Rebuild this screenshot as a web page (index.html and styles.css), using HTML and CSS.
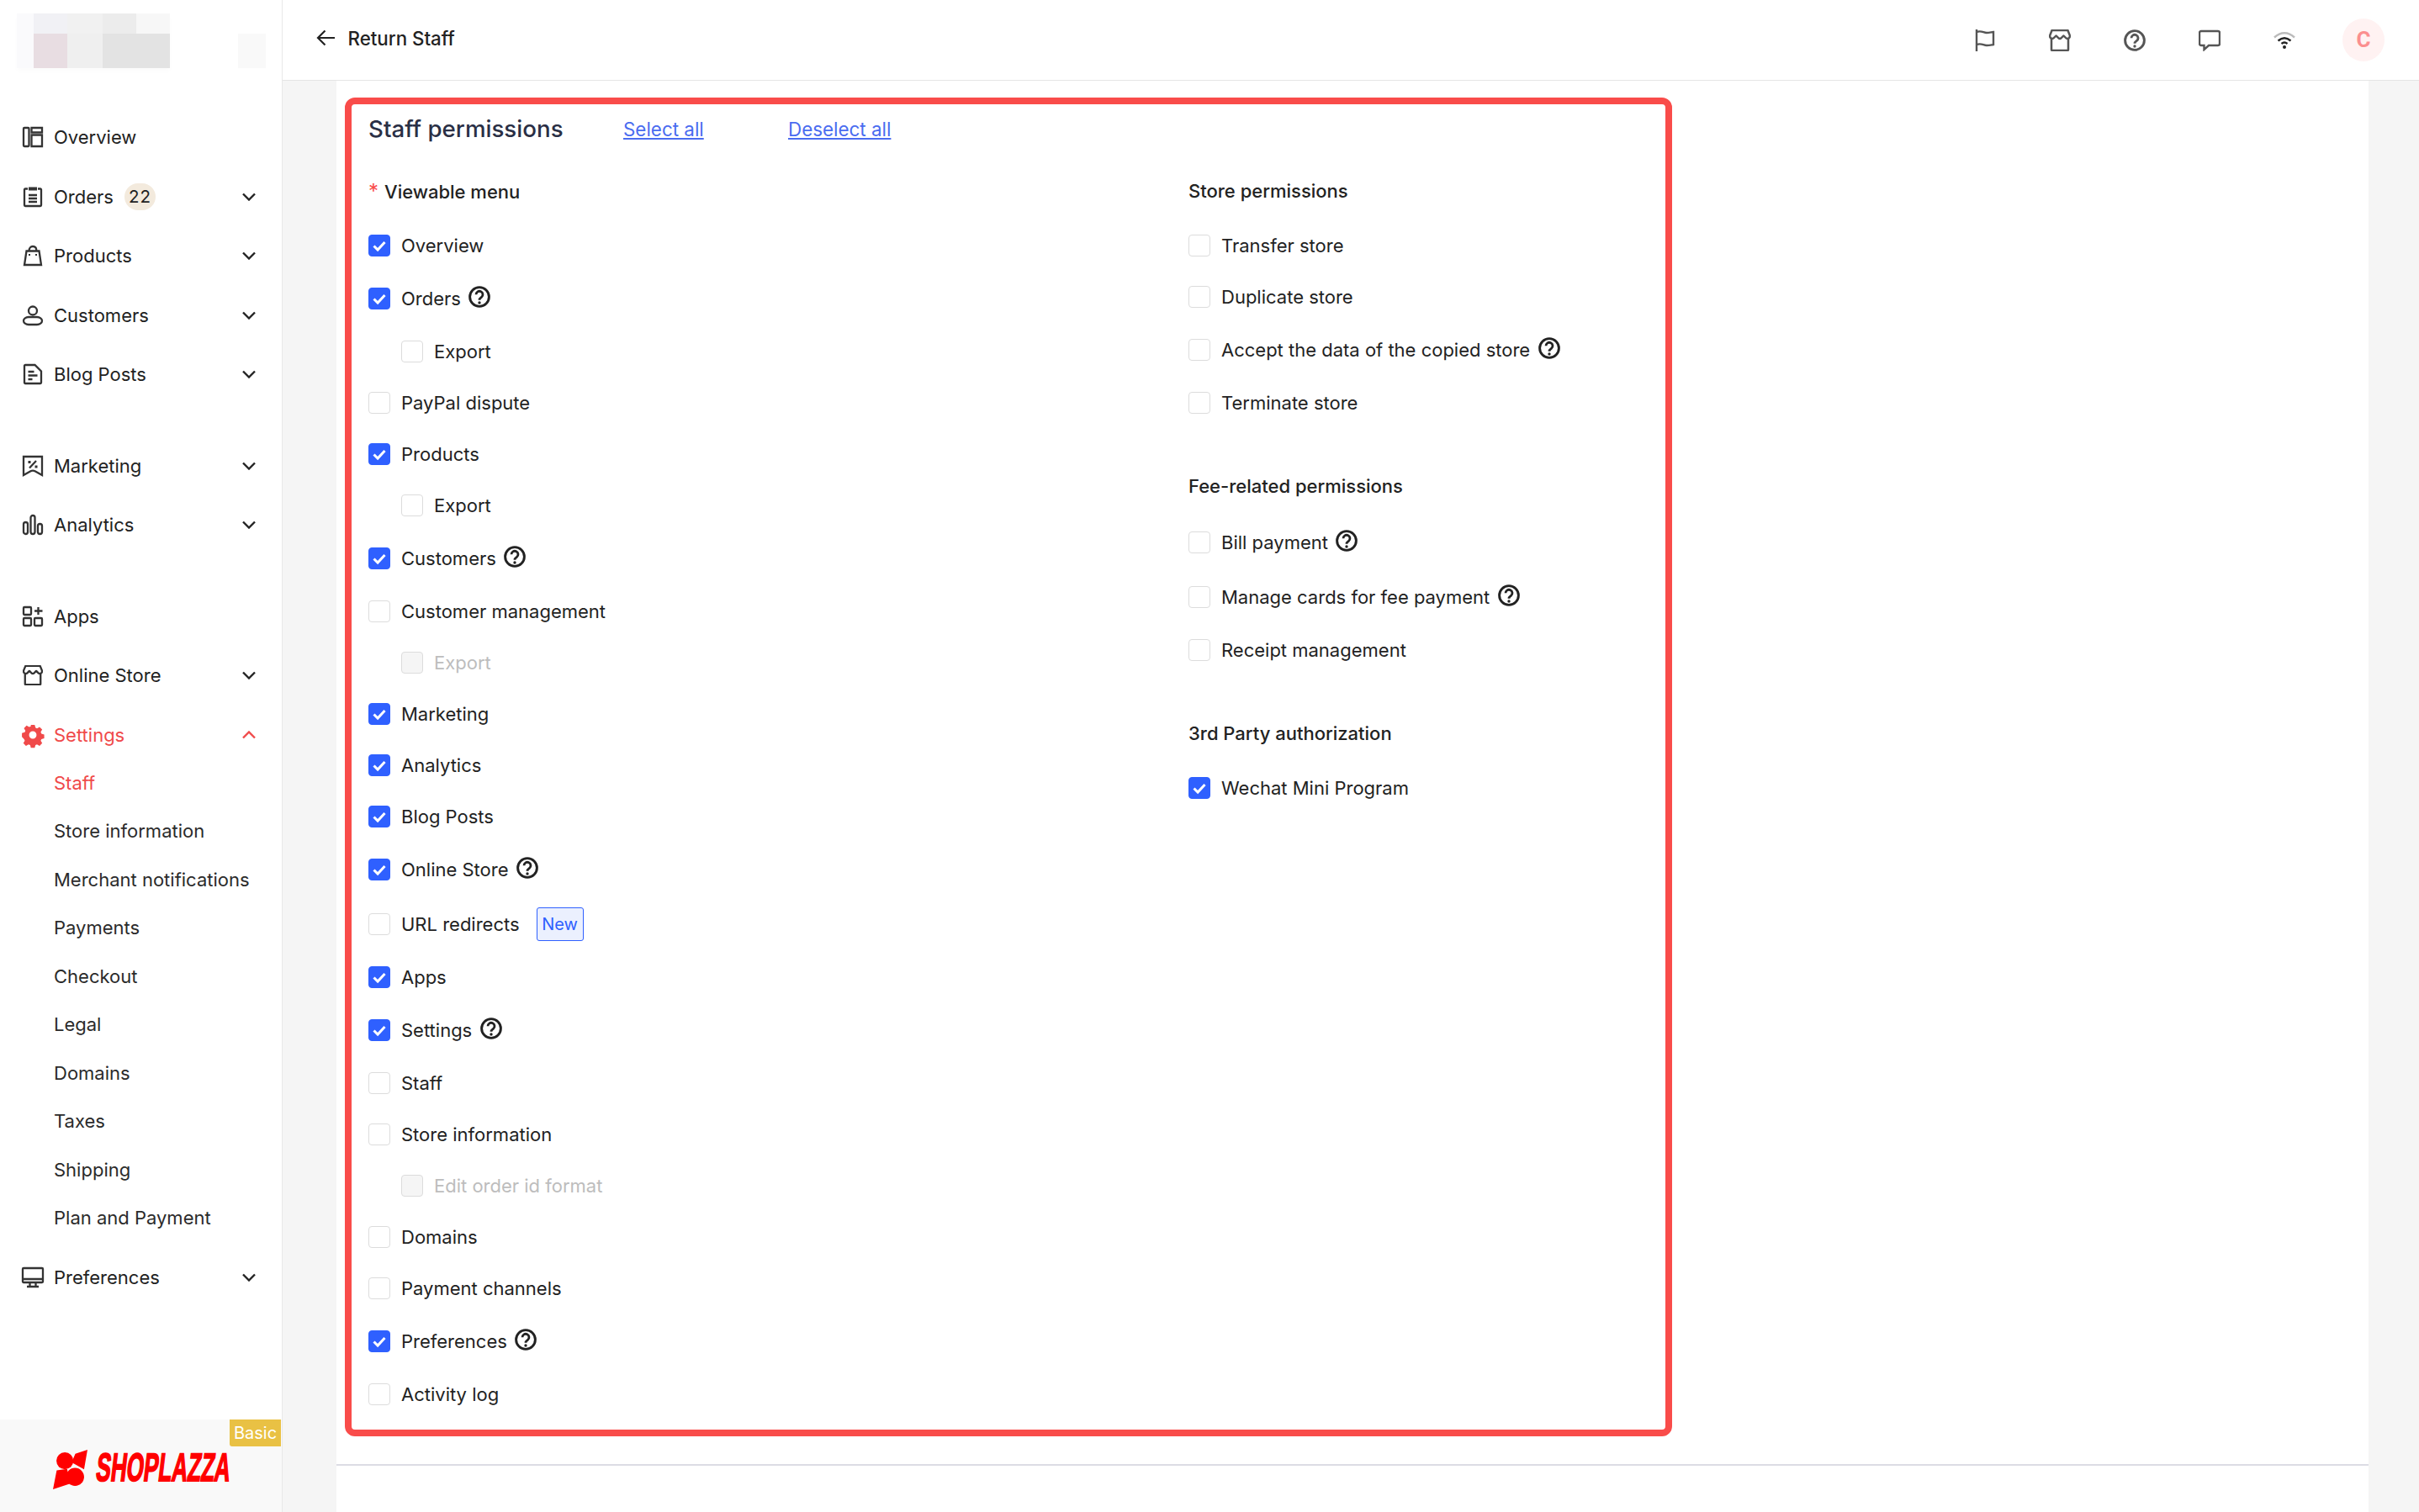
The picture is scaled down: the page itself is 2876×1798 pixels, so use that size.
FILE: index.html
```html
<!DOCTYPE html>
<html lang="en">
<head>
<meta charset="utf-8">
<title>Return Staff</title>
<link rel="stylesheet" href="styles.css">
</head>
<body>
<svg class="defs" aria-hidden="true">
  <symbol id="help" viewBox="0 0 26 26"><circle cx="13" cy="13" r="11.400" fill="none" stroke="currentColor" stroke-width="2.900"/><path d="M9 10.300a4 4 0 1 1 6.400 3.200c-1.400 1-2.400 1.600-2.400 3.200" fill="none" stroke="currentColor" stroke-width="2.800"/><circle cx="13" cy="20" r="1.700" fill="currentColor"/></symbol>
  <symbol id="check" viewBox="0 0 26 26"><path d="M6.500 13.500l4.600 4.600 8.400-9" fill="none" stroke="#fff" stroke-width="3"/></symbol>
  <symbol id="chev" viewBox="0 0 16 10"><path d="M1 1.500l7 7 7-7" fill="none" stroke="currentColor" stroke-width="2.400"/></symbol>
  <symbol id="store" viewBox="0 0 26 26"><path d="M3 11v13a1 1 0 0 0 1 1h18a1 1 0 0 0 1-1V11M3.600 1h18.800l2.600 6.500c0 2.500-2 3.500-3.200 3.500-1.800 0-3.600-3.400-4.400-3.400S15 11 13 11 9.400 7.600 8.600 7.600 6 11 4.200 11C3 11 1 10 1 7.500z" fill="none" stroke="currentColor" stroke-width="2.500" stroke-linejoin="round"/></symbol>
</svg>

<aside class="sidebar">
  <div class="brand-top">
    <div class="mosaic" aria-hidden="true">
      <i class="m1"></i><i class="m2"></i><i class="m3"></i><i class="m4"></i><i class="m5"></i>
      <i class="m1"></i><i class="m6"></i><i class="m7"></i><i class="m8"></i><i class="m8"></i>
    </div>
    <i class="mosaic-side" aria-hidden="true"></i>
  </div>
  <nav class="nav">
    <div class="nav-group">
      <a class="nav-item"><svg class="nav-icon" viewBox="0 0 24 24"><rect x="1" y="1" width="6.500" height="22" rx="1"/><path d="M10.500 1h12.500v5.500H10.500zM10.500 9.500H23V23H10.500z"/></svg><span>Overview</span></a>
      <a class="nav-item"><svg class="nav-icon" viewBox="0 0 24 24"><path d="M6 2.500H3a1 1 0 0 0-1 1V22a1 1 0 0 0 1 1h18a1 1 0 0 0 1-1V3.500a1 1 0 0 0-1-1h-3M7 10h10M7 14h10M7 18h10"/><rect class="solid" x="7" y="0.500" width="10" height="4"/></svg><span>Orders</span><b class="count">22</b><svg class="chev"><use href="#chev"/></svg></a>
      <a class="nav-item"><svg class="nav-icon" viewBox="0 0 24 24"><path d="M4.500 6.500h15L22 23H2zM7.500 6.500C7.500 3 9.500 1 12 1s4.500 2 4.500 5.500"/><rect class="solid" x="7" y="10" width="2" height="2"/><rect class="solid" x="15" y="10" width="2" height="2"/></svg><span>Products</span><svg class="chev"><use href="#chev"/></svg></a>
      <a class="nav-item"><svg class="nav-icon" viewBox="0 0 24 24"><circle cx="12" cy="6.500" r="5"/><path d="M7 14h10a6 4.500 0 0 1 0 9H7a6 4.500 0 0 1 0-9z"/></svg><span>Customers</span><svg class="chev"><use href="#chev"/></svg></a>
      <a class="nav-item"><svg class="nav-icon" viewBox="0 0 24 24"><path d="M2 2a1 1 0 0 1 1-1h11.500L22 8.500V22a1 1 0 0 1-1 1H3a1 1 0 0 1-1-1zM6.500 9h7M6.500 13.500h11M6.500 18h5"/></svg><span>Blog Posts</span><svg class="chev"><use href="#chev"/></svg></a>
    </div>
    <div class="nav-group">
      <a class="nav-item"><svg class="nav-icon" viewBox="0 0 24 24"><path d="M1 1h22v22l-8-4.500a6 6 0 0 0-6 0L1 23zM8 14.500L16 6"/><rect class="solid" x="6.500" y="6" width="3" height="3"/><rect class="solid" x="14.500" y="11.500" width="3" height="3"/></svg><span>Marketing</span><svg class="chev"><use href="#chev"/></svg></a>
      <a class="nav-item"><svg class="nav-icon" viewBox="0 0 24 24"><rect x="1" y="9" width="5" height="14" rx="2.500"/><rect x="9.500" y="1" width="5" height="22" rx="2.500"/><rect x="18" y="11" width="5" height="12" rx="2.500"/></svg><span>Analytics</span><svg class="chev"><use href="#chev"/></svg></a>
    </div>
    <div class="nav-group">
      <a class="nav-item"><svg class="nav-icon" viewBox="0 0 24 24"><rect x="1" y="1" width="9" height="9" rx="1"/><rect x="1" y="14" width="9" height="9" rx="1"/><rect x="14" y="14" width="9" height="9" rx="1"/><path d="M18.500 1v9M14 5.500h9.500"/></svg><span>Apps</span></a>
      <a class="nav-item"><svg class="nav-icon nav-icon-sym"><use href="#store"/></svg><span>Online Store</span><svg class="chev"><use href="#chev"/></svg></a>
      <a class="nav-item nav-active"><svg class="nav-icon-gear" viewBox="0 0 26 26"><path fill-rule="evenodd" d="M10.500 0h5l.9 3.600 2 .9 3.300-1.900 3.400 3.400-1.900 3.300.9 2.200 3.600.9v5l-3.600.9-.9 2 1.900 3.300-3.400 3.400-3.300-1.900-2 .9-.9 3.600h-5l-.9-3.600-2.100-.9-3.300 1.900-3.400-3.400 1.900-3.300-.9-2L-1 15.500v-5l3.600-.9.9-2.100L1.600 4.200 5 .8l3.300 1.900 2.100-.9zM13 8.200a4.800 4.800 0 1 0 0 9.600 4.800 4.800 0 0 0 0-9.600z"/></svg><span>Settings</span><svg class="chev chev-up"><use href="#chev"/></svg></a>
      <div class="sub-list">
        <a class="sub-item sub-active">Staff</a>
        <a class="sub-item">Store information</a>
        <a class="sub-item">Merchant notifications</a>
        <a class="sub-item">Payments</a>
        <a class="sub-item">Checkout</a>
        <a class="sub-item">Legal</a>
        <a class="sub-item">Domains</a>
        <a class="sub-item">Taxes</a>
        <a class="sub-item">Shipping</a>
        <a class="sub-item">Plan and Payment</a>
      </div>
      <a class="nav-item"><svg class="nav-icon" viewBox="0 0 24 24"><rect x="0" y="1" width="24" height="17" rx="1"/><path d="M0 14h24M8.500 18v5M15.500 18v5M5 23h14"/></svg><span>Preferences</span><svg class="chev"><use href="#chev"/></svg></a>
    </div>
  </nav>
  <div class="side-foot">
    <span class="plan-tag">Basic</span>
    <svg class="logo-mark" viewBox="0 0 122 140" aria-hidden="true"><path d="M122 0L79 14 66 45l44 24zM13 73L0 140l61-20-11-52z"/><circle cx="42" cy="39" r="30"/><circle cx="78" cy="96" r="32"/></svg>
    <span class="logo-text"><span class="logo-inner">SHOPLAZZA</span></span>
  </div>
</aside>

<div class="main">
  <header class="topbar">
    <a class="back"><svg class="back-arrow" viewBox="0 0 22 20"><path d="M22 10H2M10.500 1.500L2 10l8.500 8.500"/></svg><span>Return Staff</span></a>
    <div class="tools">
      <svg class="tool" viewBox="0 0 26 26"><path d="M3 0v26M3 3c6-2 8 1 12 1 3 0 5-.6 8-1v15c-3 .5-5 1-8 1-4 0-6-3-12-1"/></svg>
      <svg class="tool"><use href="#store"/></svg>
      <svg class="tool"><use href="#help"/></svg>
      <svg class="tool" viewBox="0 0 26 26"><path d="M3 2h20a2 2 0 0 1 2 2v13a2 2 0 0 1-2 2H12l-5.500 5v-5H3a2 2 0 0 1-2-2V4a2 2 0 0 1 2-2z"/></svg>
      <svg class="tool wifi" viewBox="0 0 26 20"><path class="wifi-off" d="M1 6.500C8.500-.500 17.500-.500 25 6.500"/><path d="M5.500 10.500c5-4.300 10-4.300 15 0M9.500 14c2.500-2 4.500-2 7 0"/><circle class="wifi-dot" cx="13" cy="18" r="2"/></svg>
      <span class="avatar">C</span>
    </div>
  </header>
  <div class="stage">
    <div class="panel">
      <section class="perm-card">
        <div class="perm-head">
          <h2>Staff permissions</h2>
          <a class="link link-select">Select all</a>
          <a class="link">Deselect all</a>
        </div>
        <div class="perm-cols">
          <div class="perm-col">
            <div class="label"><em>*</em>Viewable menu</div>
            <div class="perm-list">
              <label class="row"><i class="cb on"><svg><use href="#check"/></svg></i>Overview</label>
              <label class="row tall"><i class="cb on"><svg><use href="#check"/></svg></i>Orders<svg class="help"><use href="#help"/></svg></label>
              <label class="row sub"><i class="cb"></i>Export</label>
              <label class="row"><i class="cb"></i>PayPal dispute</label>
              <label class="row"><i class="cb on"><svg><use href="#check"/></svg></i>Products</label>
              <label class="row sub"><i class="cb"></i>Export</label>
              <label class="row tall"><i class="cb on"><svg><use href="#check"/></svg></i>Customers<svg class="help"><use href="#help"/></svg></label>
              <label class="row"><i class="cb"></i>Customer management</label>
              <label class="row sub off"><i class="cb"></i>Export</label>
              <label class="row"><i class="cb on"><svg><use href="#check"/></svg></i>Marketing</label>
              <label class="row"><i class="cb on"><svg><use href="#check"/></svg></i>Analytics</label>
              <label class="row"><i class="cb on"><svg><use href="#check"/></svg></i>Blog Posts</label>
              <label class="row tall"><i class="cb on"><svg><use href="#check"/></svg></i>Online Store<svg class="help"><use href="#help"/></svg></label>
              <label class="row tall"><i class="cb"></i>URL redirects<span class="new">New</span></label>
              <label class="row"><i class="cb on"><svg><use href="#check"/></svg></i>Apps</label>
              <label class="row tall"><i class="cb on"><svg><use href="#check"/></svg></i>Settings<svg class="help"><use href="#help"/></svg></label>
              <label class="row"><i class="cb"></i>Staff</label>
              <label class="row"><i class="cb"></i>Store information</label>
              <label class="row sub off"><i class="cb"></i>Edit order id format</label>
              <label class="row"><i class="cb"></i>Domains</label>
              <label class="row"><i class="cb"></i>Payment channels</label>
              <label class="row tall"><i class="cb on"><svg><use href="#check"/></svg></i>Preferences<svg class="help"><use href="#help"/></svg></label>
              <label class="row"><i class="cb"></i>Activity log</label>
            </div>
          </div>
          <div class="perm-col">
            <div class="label">Store permissions</div>
            <div class="perm-list">
              <label class="row"><i class="cb"></i>Transfer store</label>
              <label class="row"><i class="cb"></i>Duplicate store</label>
              <label class="row tall"><i class="cb"></i>Accept the data of the copied store<svg class="help"><use href="#help"/></svg></label>
              <label class="row"><i class="cb"></i>Terminate store</label>
            </div>
            <div class="label label-next">Fee-related permissions</div>
            <div class="perm-list">
              <label class="row tall"><i class="cb"></i>Bill payment<svg class="help"><use href="#help"/></svg></label>
              <label class="row tall"><i class="cb"></i>Manage cards for fee payment<svg class="help"><use href="#help"/></svg></label>
              <label class="row"><i class="cb"></i>Receipt management</label>
            </div>
            <div class="label label-next">3rd Party authorization</div>
            <div class="perm-list">
              <label class="row"><i class="cb on"><svg><use href="#check"/></svg></i>Wechat Mini Program</label>
            </div>
          </div>
        </div>
      </section>
      <div class="panel-foot"></div>
    </div>
  </div>
</div>
</body>
</html>
```
FILE: styles.css
```css
* { box-sizing: border-box; }
html, body { margin: 0; height: 100%; }
body {
  display: flex;
  height: 1798px;
  overflow: hidden;
  background: #fff;
  color: #222;
  font-family: Inter, "Liberation Sans", sans-serif;
  font-size: 22px;
}
.defs { position: absolute; width: 0; height: 0; }
a { color: inherit; text-decoration: none; }

/* sidebar */
.sidebar {
  width: 336px;
  flex: none;
  display: flex;
  flex-direction: column;
  border-right: 1px solid #e8e8e8;
  background: #fff;
}
.brand-top {
  height: 128px;
  flex: none;
  display: flex;
  padding: 16px 0 0 20px;
}
.mosaic {
  display: grid;
  grid-template-columns: 20px 40px 42px 40px 40px;
  grid-template-rows: 24px 41px;
  height: 65px;
  box-shadow: 0 4px 6px #fcfcfc;
}
.mosaic i { display: block; }
.m1 { background: #fafafc; }
.m2 { background: #f1f1f5; }
.m3 { background: #f1f1f1; }
.m4 { background: #ececec; }
.m5 { background: #f7f7f7; }
.m6 { background: #e8dde2; }
.m7 { background: #efefef; }
.m8 { background: #e3e3e3; }
.mosaic-side {
  display: block;
  width: 33px;
  height: 41px;
  margin: 24px 0 0 81px;
  background: #f9f9f9;
}
.nav { flex: 1; }
.nav-group { margin-bottom: 38px; }
.nav-item {
  display: flex;
  align-items: center;
  height: 70.5px;
  padding: 0 31px 0 27px;
  color: #222;
}
.nav-icon {
  width: 24px;
  height: 24px;
  flex: none;
  margin-right: 13px;
  fill: none;
  stroke: #333;
  stroke-width: 2.300;
  overflow: visible;
}
.nav-icon .solid { fill: #333; stroke: none; }
.nav-icon-sym { color: #333; stroke: none; }
.nav-icon-gear {
  width: 24px;
  height: 24px;
  flex: none;
  margin-right: 13px;
  fill: #f04a4a;
  overflow: visible;
}
.chev { width: 16px; height: 10px; margin-left: auto; flex: none; color: #222; }
.chev-up { transform: rotate(180deg); color: #f04a4a; }
.count {
  margin-left: 13px;
  width: 37px;
  height: 32px;
  border-radius: 16px;
  background: #f3eadd;
  font-weight: 400;
  font-size: 20.500px;
  letter-spacing: 1px;
  line-height: 32px;
  text-align: center;
}
.nav-active { color: #f04a4a; }
.sub-list { margin: -7px 0 7px; }
.sub-item {
  display: flex;
  align-items: center;
  height: 57.500px;
  padding-left: 64px;
  color: #2b2b2b;
}
.sub-active { color: #f04a4a; }
.side-foot {
  position: relative;
  flex: none;
  height: 110px;
  display: flex;
  align-items: center;
  padding: 8px 0 0 63px;
  background: #f9f9f9;
}
.plan-tag {
  position: absolute;
  top: 0;
  right: 1px;
  width: 61px;
  height: 32px;
  border-bottom-left-radius: 3px;
  background: #e9c144;
  color: #fff;
  font-size: 20px;
  line-height: 32px;
  text-align: center;
}
.logo-mark { width: 41px; height: 47px; flex: none; fill: #f00; }
.logo-text { display: block; width: 157px; margin: 0 0 6px 11px; white-space: nowrap; }
.logo-inner {
  display: inline-block;
  font-family: "Liberation Sans", Arial, sans-serif;
  font-weight: 700;
  font-size: 47px;
  line-height: 47px;
  color: #f00;
  -webkit-text-stroke: 1.800px #f00;
  transform-origin: left center;
  transform: scaleX(.555) skewX(-12deg);
}

/* main */
.main { flex: 1; min-width: 0; display: flex; flex-direction: column; }
.topbar {
  height: 96px;
  flex: none;
  display: flex;
  align-items: center;
  justify-content: space-between;
  padding: 0 41px 0 40px;
  border-bottom: 1px solid #e5e5e5;
  background: #fff;
}
.back {
  display: flex;
  align-items: center;
  gap: 15.500px;
  padding-bottom: 5px;
  font-size: 22.300px;
  font-weight: 500;
}
.back-arrow { width: 22px; height: 20px; fill: none; stroke: #222; stroke-width: 2.200; }
.tools { display: flex; align-items: center; gap: 63px; }
.tool {
  width: 26px;
  height: 26px;
  color: #555;
  fill: none;
  stroke: #555;
  stroke-width: 2.400;
}
.tools .tool:nth-child(2), .tools .tool:nth-child(3) { stroke: none; }
.wifi { height: 20px; stroke: #222; }
.wifi-off { stroke: #bbb; }
.wifi-dot { fill: #222; stroke: none; }
.avatar {
  width: 50px;
  height: 51px;
  margin-left: -7px;
  border-radius: 50%;
  background: #fff2f2;
  color: #fb8f8f;
  font-family: Roboto, sans-serif;
  font-weight: 700;
  font-size: 26px;
  line-height: 51px;
  text-align: center;
}
.stage {
  flex: 1;
  min-height: 0;
  padding: 0 60px 0 64px;
  background: #f5f5f5;
}
.panel { height: 100%; background: #fff; padding-top: 20px; }
.perm-card {
  width: 1578px;
  height: 1592px;
  margin-left: 10px;
  padding: 0 20px;
  border: 8px solid #f94c4a;
  border-radius: 12px;
}
.perm-head {
  display: flex;
  align-items: center;
  height: 58px;
  margin-bottom: 25px;
}
.perm-head h2 {
  margin: 0;
  width: 303px;
  font-size: 27.700px;
  font-weight: 500;
  color: #2a2f45;
  white-space: nowrap;
}
.link { color: #4a6cf0; text-decoration: underline; font-weight: 400; font-size: 22.400px; }
.link-select { width: 196px; }
.perm-cols { display: grid; grid-template-columns: 975px 1fr; }
.label { height: 41px; margin-bottom: 25px; line-height: 41px; font-weight: 500; color: #222; }
.label em { margin-right: 7px; color: #f94c4a; font-size: 24px; font-style: normal; font-weight: 400; }
.label-next { margin-top: 61px; }
.perm-list { display: flex; flex-direction: column; gap: 24px; }
.row {
  display: flex;
  align-items: center;
  height: 37px;
  white-space: nowrap;
}
.row.tall { height: 41px; }
.row.sub { padding-left: 39px; }
.row.off { color: #bdbdbd; }
.cb {
  width: 26px;
  height: 26px;
  flex: none;
  margin-right: 13px;
  border: 1px solid #dcdcdc;
  border-radius: 4px;
  background: #fff;
}
.cb svg { display: block; width: 26px; height: 26px; margin: -1px; }
.cb.on { border-color: #2f60ff; background: #2f60ff; }
.row.off .cb { background: #f5f5f5; }
.help { width: 26px; height: 26px; margin: -3px 0 0 9.500px; flex: none; color: #222; }
.new {
  width: 56px;
  height: 40px;
  margin-left: 20px;
  border: 1px solid #2f60ff;
  border-radius: 3px;
  background: #ebf0fe;
  color: #2f60ff;
  font-size: 20px;
  line-height: 38px;
  text-align: center;
}
.panel-foot { margin-top: 33px; border-top: 2px solid #dcdce4; }
```
